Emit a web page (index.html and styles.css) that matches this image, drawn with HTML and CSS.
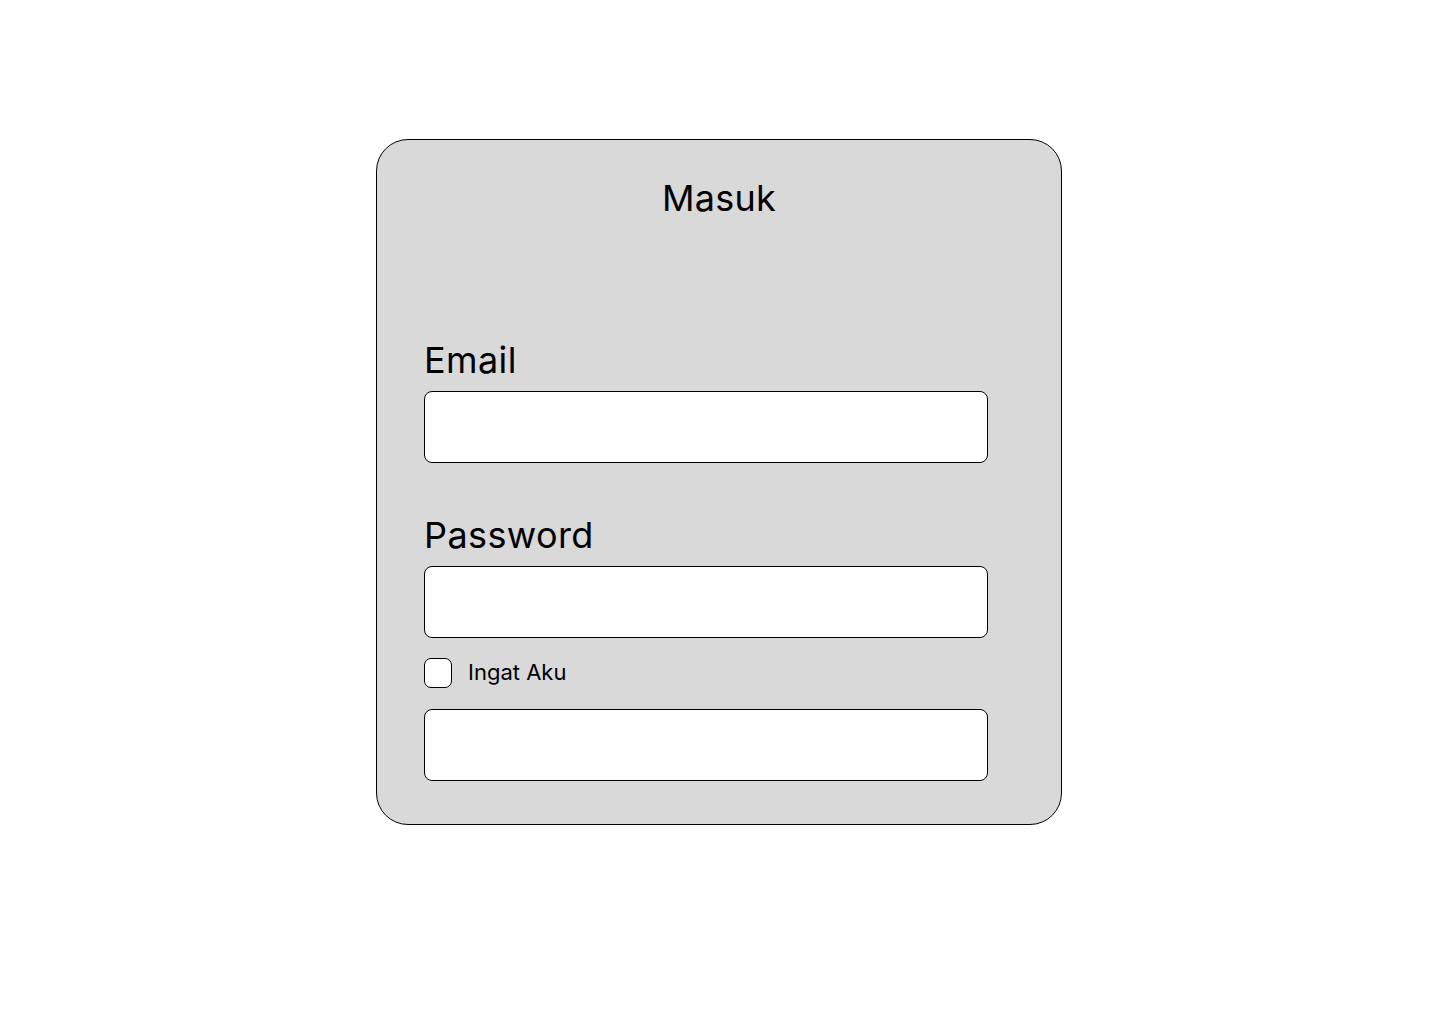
FILE: index.html
```html
<!DOCTYPE html>
<html lang="id">
<head>
<meta charset="utf-8">
<title>Masuk</title>
<link rel="stylesheet" href="styles.css">
</head>
<body>
<main class="page">
  <form class="card">
    <h1 class="title">Masuk</h1>
    <label class="label label-email" for="email">Email</label>
    <input class="field" id="email" type="email">
    <label class="label label-password" for="password">Password</label>
    <input class="field" id="password" type="password">
    <div class="remember">
      <span class="check"></span>
      <span class="remember-text">Ingat Aku</span>
    </div>
    <button class="field submit" type="submit"></button>
  </form>
</main>
</body>
</html>
```
FILE: styles.css
```css
* { box-sizing: border-box; }
html, body { margin: 0; padding: 0; background: #ffffff; }
body { font-family: Inter, "Noto Sans", sans-serif; color: #000; }
.page { padding: 139px 0 0 376px; }
.card {
  width: 686px;
  height: 686px;
  background: #d9d9d9;
  border: 1px solid #000;
  border-radius: 32px;
  padding: 36px 0 0 47px;
  display: flex;
  flex-direction: column;
  align-items: flex-start;
}
.title {
  align-self: stretch;
  margin: 0 47px 0 0;
  text-align: center;
  font-size: 36px;
  line-height: 44px;
  font-weight: 400;
  letter-spacing: 0.2px;
}
.label {
  font-size: 36px;
  line-height: 44px;
  font-weight: 400;
  letter-spacing: 0.4px;
}
.label-email { margin-top: 118px; margin-bottom: 9px; }
.label-password { margin-top: 50px; margin-bottom: 9px; }
.field {
  display: block;
  width: 564px;
  height: 72px;
  margin: 0;
  padding: 0;
  background: #fff;
  border: 1px solid #000;
  border-radius: 8px;
  font: inherit;
}
.remember {
  display: flex;
  align-items: center;
  margin-top: 20px;
  height: 30px;
}
.check {
  width: 28px;
  height: 30px;
  background: #fff;
  border: 1px solid #000;
  border-radius: 7px;
}
.remember-text {
  margin-left: 16px;
  font-size: 22px;
  line-height: 28px;
  padding-bottom: 2px;
}
.submit { margin-top: 21px; }
```
